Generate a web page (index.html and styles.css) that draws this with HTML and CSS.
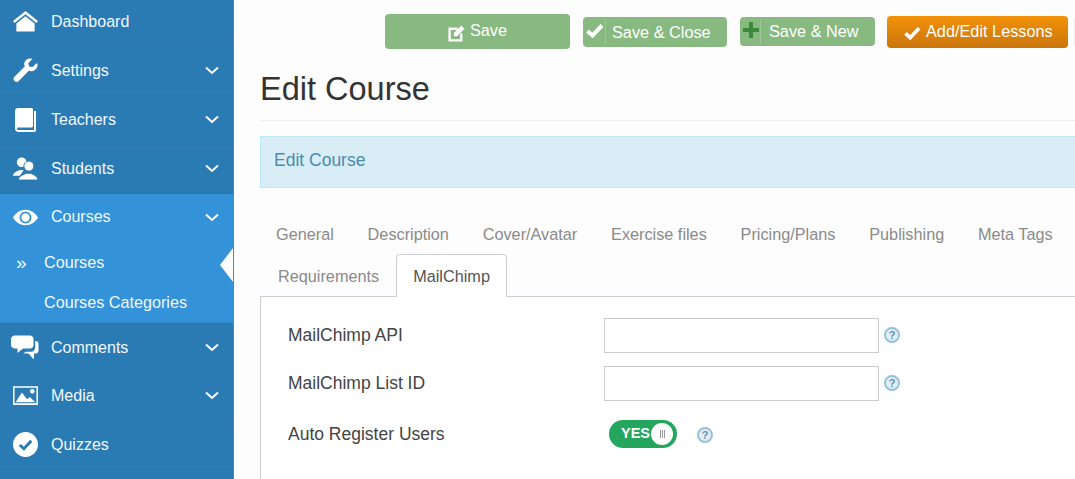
FILE: index.html
```html
<!DOCTYPE html>
<html lang="en">
<head>
<meta charset="utf-8">
<title>Edit Course</title>
<link rel="stylesheet" href="styles.css">
</head>
<body>
<div class="app">
  <nav class="sidebar">
    <a class="item first"><svg class="ico" viewBox="0 0 26 22"><path d="M13 0 0 10.500l1.600 2L13 3.500l11.400 9 1.600-2L13 0Z"/><path d="M13 5.500 3.500 13V21.500h19V13L13 5.500Z"/></svg><span class="label">Dashboard</span></a>
    <a class="item"><svg class="ico" viewBox="0 0 26 26"><path d="M24.500 5.500 20 9.500l-3.300-.8-.8-3.200L20 1C16.500-.3 12.500 1.500 11.800 5.300c-.2 1.200-.1 2.400.4 3.500L1.500 19.500c-1.300 1.300-1.200 3.300.1 4.500 1.200 1.200 3.200 1.200 4.400-.1l10.500-10.600c4.400 1.500 8.700-1.500 9-5.600 0-.8-.1-1.500-.5-2.200Z"/></svg><span class="label">Settings</span><svg class="chev" viewBox="0 0 14 9"><path d="M1 1.500 7 7l6-5.500"/></svg></a>
    <a class="item"><span class="ico-box"><svg class="book" viewBox="0 0 21 24"><path d="M3 0h13.500c.8 0 1.500.7 1.500 1.500V18c0 .8-.7 1.500-1.500 1.500H3.500c-2 0-2 2.500 0 2.500H19V3h2v19.500c0 .8-.7 1.500-1.500 1.500H3.500C1.500 24 0 22.500 0 20.500V3C0 1.300 1.300 0 3 0Z"/></svg></span><span class="label">Teachers</span><svg class="chev" viewBox="0 0 14 9"><path d="M1 1.500 7 7l6-5.500"/></svg></a>
    <a class="item"><svg class="ico" viewBox="0 0 26 24"><circle cx="9" cy="5.500" r="5"/><path d="M0 19.500c.4-3.500 3.500-4.500 6-5.500 1.500-.6 3.500-.6 5 0l-4 5.500Z"/><circle class="front" cx="16.500" cy="9.500" r="5.200"/><path class="front" d="M5.500 24c.5-4 4-5 7-6.500 1.500-.7 5.500-.7 7 0 3 1.500 6 2.500 6.500 6.500Z"/></svg><span class="label">Students</span><svg class="chev" viewBox="0 0 14 9"><path d="M1 1.500 7 7l6-5.500"/></svg></a>
    <div class="group">
      <a class="item active"><svg class="ico" viewBox="0 0 26 16"><path fill-rule="evenodd" d="M13 0C7.500 0 3 3 0 8c3 5 7.500 8 13 8s10-3 13-8c-3-5-7.500-8-13-8Zm0 1.800a6.200 6.200 0 1 1 0 12.400 6.200 6.200 0 0 1 0-12.400Z"/><circle cx="13" cy="8" r="4.300"/></svg><span class="label">Courses</span><svg class="chev" viewBox="0 0 14 9"><path d="M1 1.500 7 7l6-5.500"/></svg></a>
      <a class="sub current"><span class="mark">»</span><span>Courses</span></a>
      <a class="sub"><span class="mark"></span><span>Courses Categories</span></a>
    </div>
    <a class="item after"><svg class="ico wide" viewBox="0 0 28 24"><path d="M4 0h15c2 0 3.500 1.500 3.500 3.500v6c0 2-1.500 3.500-3.500 3.500h-7l-5.500 4.500V13H4c-2 0-4-1.500-4-3.500v-6C0 1.500 2 0 4 0Z"/><path d="M24.200 5.500h.3c1.800 0 3 1.300 3 3V15c0 1.700-1.200 3-3 3H23v2l-.2 4-5.300-6h-5l2-1.700h5.500c2.200 0 4.200-1.800 4.200-4Z"/></svg><span class="label">Comments</span><svg class="chev" viewBox="0 0 14 9"><path d="M1 1.500 7 7l6-5.500"/></svg></a>
    <a class="item"><svg class="ico" viewBox="0 0 24 18"><path fill-rule="evenodd" d="M0 0h24v18H0V0Zm1.500 1.500v15h21v-15h-21Z"/><circle cx="18.500" cy="5" r="2.200"/><path d="M2.500 15.500 8.500 6l5 6.500 2.500-2 5.500 5Z"/></svg><span class="label">Media</span><svg class="chev" viewBox="0 0 14 9"><path d="M1 1.500 7 7l6-5.500"/></svg></a>
    <a class="item"><svg class="ico" viewBox="0 0 24 24"><circle cx="12" cy="12" r="12"/><path class="tick" d="m6.500 12.500 4 3.500 7-7.500"/></svg><span class="label">Quizzes</span></a>
  </nav>
  <main class="main">
    <div class="toolbar">
      <a class="btn btn-save"><svg class="save-ico" viewBox="0 0 16 16"><path d="M9 3.500H1.500v11h11V8" class="outline"/><path d="M5.500 7.500 12.500.5l3 3-7 7h-3v-3Z"/></svg><span>Save</span></a>
      <a class="btn btn-close"><svg class="tool-ico" viewBox="0 0 18 15"><path d="m1.500 8 5 4.500L16 2.500" class="heavy"/></svg><span class="sep"></span><span>Save &amp; Close</span></a>
      <a class="btn btn-new"><svg class="tool-ico plus" viewBox="0 0 16 16"><path d="M6 0h4v6h6v4h-6v6H6v-6H0V6h6Z"/></svg><span class="sep"></span><span>Save &amp; New</span></a>
      <a class="btn btn-lessons"><svg class="lesson-ico" viewBox="0 0 18 15"><path d="m1.500 8 5 4.500L16 2.500" class="heavy"/></svg><span>Add/Edit Lessons</span></a>
      <a class="btn btn-stub"></a>
    </div>
    <h1 class="title">Edit Course</h1>
    <div class="alert">Edit Course</div>
    <div class="tabs">
      <div class="tab-row top">
        <a class="tab">General</a><a class="tab">Description</a><a class="tab">Cover/Avatar</a><a class="tab">Exercise files</a><a class="tab">Pricing/Plans</a><a class="tab">Publishing</a><a class="tab">Meta Tags</a>
      </div>
      <div class="tab-row bottom">
        <a class="tab req">Requirements</a><a class="tab on">MailChimp</a>
      </div>
    </div>
    <div class="panel">
      <div class="row"><label class="lbl">MailChimp API</label><input class="field" type="text"><span class="help">?</span></div>
      <div class="row"><label class="lbl">MailChimp List ID</label><input class="field" type="text"><span class="help">?</span></div>
      <div class="row switch-row"><label class="lbl">Auto Register Users</label><div class="switch"><span class="yes">YES</span><span class="knob"><i></i><i></i><i></i></span></div><span class="help far">?</span></div>
    </div>
  </main>
</div>
</body>
</html>
```
FILE: styles.css
```css
* { box-sizing: border-box; }
html, body { margin: 0; height: 479px; overflow: hidden; }
body { font-family: "Liberation Sans", Arial, sans-serif; font-size: 16px; background: #fdfdfd; color: #333; }
a { color: inherit; text-decoration: none; }
.app { display: flex; height: 479px; overflow: hidden; }

.sidebar { width: 234px; flex: none; background: #2a7ab4; color: #f2f8fc; border-right: 1px solid #3f8cc4; }
.item { display: flex; align-items: center; height: 49px; padding: 0 14px 1px 13px; border-bottom: 1px solid #2b77ae; }
.item.first { height: 47px; padding-bottom: 3px; }
.item.after { padding: 1px 14px 0 13px; }
.ico { width: 25px; height: 25px; flex: none; fill: #fff; }
.ico.wide { width: 28px; margin-left: -2px; margin-right: -1px; }
.ico-box { display: flex; justify-content: center; width: 25px; flex: none; }
.book { width: 21px; height: 24px; fill: #fff; }
.front { stroke: #2a7ab4; stroke-width: 1; }
.tick { fill: none; stroke: #2a7ab4; stroke-width: 2.800; }
.label { margin-left: 13px; flex: 1; }
.chev { width: 14px; height: 9px; flex: none; fill: none; stroke: #fff; stroke-width: 2; }
.group { background: #3492d9; height: 129px; border-bottom: 1px solid #2f88c8; }
.item.active { height: 46px; border-bottom: 0; padding-bottom: 0; }
.sub { position: relative; display: flex; align-items: center; height: 36px; padding-left: 16px; font-size: 16.200px; }
.sub.current { height: 44px; }
.mark { width: 28px; font-size: 19px; line-height: 1; }
.sub.current::after { content: ""; position: absolute; right: 0; top: 8px; border-style: solid; border-width: 17px 13px 17px 0; border-color: transparent #fff transparent transparent; }

.main { flex: 1; min-width: 0; padding: 14px 0 0 26px; overflow: hidden; }
.toolbar { display: flex; align-items: flex-start; height: 35px; padding-left: 125px; white-space: nowrap; color: #fff; font-size: 16.300px; }
.btn { display: flex; align-items: center; flex: none; border-radius: 4px; background: #87b981; }
.btn-save { width: 185px; height: 35px; justify-content: center; gap: 5px; padding-bottom: 2px; }
.save-ico { width: 17px; height: 17px; fill: #fff; margin-top: 5px; }
.outline { fill: none; stroke: #fff; stroke-width: 2.200; }
.btn-close { width: 144px; height: 30px; margin: 3px 0 0 13px; padding-left: 3px; }
.btn-new { width: 135px; height: 29px; margin: 3px 0 0 13px; padding-left: 3px; }
.tool-ico { width: 18px; height: 15px; margin: -3px 1px 0 0; }
.tool-ico.plus { width: 16px; height: 16px; fill: #3b8a3b; margin: -4px 1px 0 0; }
.heavy { fill: none; stroke: #fff; stroke-width: 4; }
.sep { width: 1px; height: 24px; margin-right: 6px; background: #9cc797; }
.btn-new .sep { margin-right: 8px; }
.btn-lessons { width: 181px; height: 32px; margin: 2px 0 0 12px; padding: 0 0 2px 17px; background: linear-gradient(#f39208, #c9760d); gap: 5px; }
.lesson-ico { width: 17px; height: 14px; margin-top: 3px; }
.btn-stub { width: 8px; height: 30px; margin: 3px 0 0 6px; background: #eee; }

.title { margin: 21px 0 0; height: 51px; font-size: 32.500px; font-weight: 400; line-height: 38px; color: #333; border-bottom: 1px solid #eee; }
.alert { height: 52px; margin-top: 15px; padding: 13px 13px; line-height: 20px; font-size: 17.500px; color: #4a8bb0; background: #d9edf7; border: 1px solid #bce8f1; border-right: 0; }

.tabs { margin-top: 26px; font-size: 16.250px; color: #8a8a8a; }
.tab-row { display: flex; white-space: nowrap; }
.tab-row.top { height: 40px; padding: 10px 0 0 16px; gap: 33.800px; line-height: 20px; }
.tab-row.bottom { height: 43px; padding-left: 2px; align-items: flex-end; margin-bottom: -1px; }
.tab { display: block; }
.req { padding: 0 17px 0 16px; height: 42px; line-height: 42px; }
.on { height: 43px; padding: 0 16px; line-height: 42px; color: #555; background: #fff; border: 1px solid #ccd0d4; border-bottom: 0; border-radius: 4px 4px 0 0; }

.panel { height: 200px; padding: 20px 0 0 27px; background: #fff; border: 1px solid #ccd0d4; border-right: 0; color: #444; font-size: 17.500px; }
.row { display: flex; align-items: center; height: 36px; margin-bottom: 12px; }
.lbl { width: 316px; flex: none; }
.field { width: 275px; height: 35px; flex: none; background: #fff; border: 1px solid #ccc; }
.help { display: flex; align-items: center; justify-content: center; width: 16px; height: 16px; flex: none; margin-left: 5px; border-radius: 50%; border: 2px solid #98c2d8; background: #e4eef4; color: #5b92b4; font-size: 11px; font-weight: 700; line-height: 1; }
.help.far { margin: 2px 0 0 20px; }
.switch-row { margin-top: 15px; }
.switch { display: flex; align-items: center; justify-content: space-between; width: 68px; height: 28px; flex: none; margin-left: 5px; padding: 0 4px 0 12px; border-radius: 14px; background: #25a65f; color: #fff; font-size: 14.500px; font-weight: 700; }
.yes { margin-top: -3px; }
.knob { display: flex; align-items: center; justify-content: center; gap: 1px; width: 22px; height: 22px; border-radius: 50%; background: #fff; }
.knob i { width: 1px; height: 8px; background: #999; }
```
